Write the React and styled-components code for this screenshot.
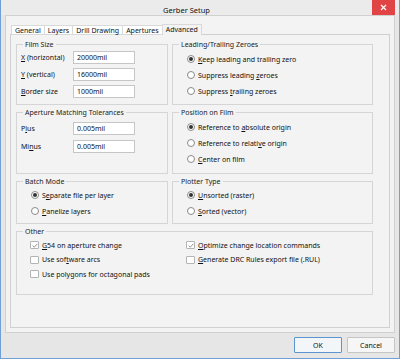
import React from 'react';
import styled, { createGlobalStyle } from 'styled-components';

const Global = createGlobalStyle`
  html, body { margin: 0; padding: 0; }
  body {
    font-family: "Noto Sans", "Open Sans", sans-serif;
    font-size: 7px;
    color: #1a1a1a;
    background: #ffffff;
  }
  #root { width: 400px; height: 359px; }
  * { box-sizing: border-box; }
`;

const Window = styled.div`
  width: 400px;
  height: 359px;
  border: 1px solid #6f9fd6;
  border-top: none;
  background: #e6e6e6;
  display: flex;
  flex-direction: column;
`;

const TitleBar = styled.div`
  height: 15px;
  display: flex;
  align-items: flex-start;
  background: #ebebeb;
`;

const Title = styled.div`
  flex: 1;
  text-align: center;
  font-size: 7.5px;
  line-height: 10px;
  padding-top: 5px;
  color: #111;
`;

const CloseButton = styled.div`
  width: 23px;
  height: 15px;
  margin-right: 4px;
  background: #e04444;
  display: flex;
  align-items: center;
  justify-content: center;
`;

const Frame = styled.div`
  margin: 0 4px;
  height: 318px;
  border: 1px solid #d0d0d0;
  background: #f3f3f3;
  padding: 9px 4px 4px 4px;
  display: flex;
  flex-direction: column;
`;

const TabRow = styled.div`
  display: flex;
  padding-left: 1px;
  height: 10px;
  position: relative;
  z-index: 1;
`;

const Tab = styled.div`
  height: ${p => (p.$active ? 11 : 10)}px;
  margin-top: ${p => (p.$active ? -1 : 0)}px;
  padding: 0 3px;
  line-height: 9px;
  border: 1px solid #d9d9d9;
  border-bottom: ${p => (p.$active ? 'none' : '1px solid #d9d9d9')};
  margin-left: -1px;
  background: ${p => (p.$active ? '#f3f3f3' : '#ffffff')};
  color: #111;
  &:first-child { margin-left: 0; }
`;

const TabPanel = styled.div`
  flex: 1;
  border: 1px solid #d0d0d0;
  margin-top: -1px;
  padding: 5px 0 0 5px;
  display: grid;
  grid-template-columns: 152px 201px;
  grid-template-rows: 65px 66px 47px 68px;
  column-gap: 4px;
  row-gap: 3px;
  align-content: start;
`;

const Group = styled.fieldset`
  margin: 0;
  min-width: 0;
  border: 1px solid #d5d5d5;
  padding: ${p => p.$pad || '2px 4px 0 4px'};
  grid-column: ${p => (p.$wide ? '1 / span 2' : 'auto')};
  display: flex;
  flex-direction: column;
  gap: ${p => p.$gap || 0}px;
`;

const Legend = styled.legend`
  padding: 0 2px;
  margin-left: 2px;
  line-height: 9px;
  color: #222;
`;

const FieldRow = styled.div`
  display: flex;
  align-items: center;
  height: 13px;
`;

const FieldLabel = styled.span`
  width: 52px;
  color: #111;
`;

const TextInput = styled.div`
  width: 62px;
  height: 13px;
  border: 1px solid #c6c6c6;
  background: #fff;
  padding-left: 3px;
  line-height: 11px;
  color: #111;
`;

const OptionRow = styled.div`
  display: flex;
  align-items: center;
  height: ${p => p.$h ?? 16}px;
  padding-left: ${p => p.$indent ?? 10}px;
  gap: 3px;
  color: #111;
`;

const RadioCircle = styled.span`
  width: 8px;
  height: 8px;
  border-radius: 50%;
  border: 1px solid #8a8a8a;
  background: #fff;
  display: flex;
  align-items: center;
  justify-content: center;
  flex: none;
  &::after {
    content: '';
    display: ${p => (p.$on ? 'block' : 'none')};
    width: 4px;
    height: 4px;
    border-radius: 50%;
    background: #333;
  }
`;

const CheckBox = styled.span`
  width: 9px;
  height: 8px;
  border: 1px solid #b4b4b4;
  border-radius: 1px;
  background: #fff;
  display: flex;
  align-items: center;
  justify-content: center;
  flex: none;
`;

const OtherGrid = styled.div`
  display: grid;
  grid-template-columns: 156px 1fr;
  grid-auto-rows: 14.5px;
  padding-left: 9px;
  padding-top: 2px;
`;

const Key = styled.u`
  text-decoration: underline;
  text-underline-offset: 1px;
  text-decoration-thickness: 1px;
`;

const Footer = styled.div`
  flex: 1;
  display: flex;
  justify-content: flex-end;
  align-items: flex-start;
  gap: 5px;
  padding: 4px 4px 0 0;
`;

const Button = styled.div`
  width: 48px;
  height: 16px;
  border: 1px solid ${p => (p.$primary ? '#5a95cf' : '#c5c5c5')};
  background: ${p => (p.$primary ? '#f3f6f9' : '#f6f6f6')};
  display: flex;
  align-items: center;
  justify-content: center;
  color: #111;
  border-radius: 1px;
`;

const Radio = ({ on, children, indent, h }) => (
  <OptionRow $indent={indent} $h={h}>
    <RadioCircle $on={on} />
    <span>{children}</span>
  </OptionRow>
);

const Check = ({ on, children }) => (
  <OptionRow $indent={0} $h={14.5}>
    <CheckBox>
      {on && (
        <svg width="6" height="5" viewBox="0 0 6 5">
          <path d="M0.6 2.6 L2.3 4.2 L5.4 0.8" fill="none" stroke="#777" strokeWidth="0.8" />
        </svg>
      )}
    </CheckBox>
    <span>{children}</span>
  </OptionRow>
);

export default function App() {
  return (
    <>
      <Global />
      <Window>
        <TitleBar>
          <Title>Gerber Setup</Title>
          <CloseButton>
            <svg width="7" height="7" viewBox="0 0 7 7">
              <path d="M1 1 L6 6 M6 1 L1 6" stroke="#fff" strokeWidth="1.2" />
            </svg>
          </CloseButton>
        </TitleBar>
        <Frame>
          <TabRow>
            <Tab>General</Tab>
            <Tab>Layers</Tab>
            <Tab>Drill Drawing</Tab>
            <Tab>Apertures</Tab>
            <Tab $active>Advanced</Tab>
          </TabRow>
          <TabPanel>
            <Group $pad="2px 4px 0 4px" $gap={4}>
              <Legend>Film Size</Legend>
              <FieldRow>
                <FieldLabel><Key>X</Key> (horizontal)</FieldLabel>
                <TextInput>20000mil</TextInput>
              </FieldRow>
              <FieldRow>
                <FieldLabel><Key>Y</Key> (vertical)</FieldLabel>
                <TextInput>16000mil</TextInput>
              </FieldRow>
              <FieldRow>
                <FieldLabel><Key>B</Key>order size</FieldLabel>
                <TextInput>1000mil</TextInput>
              </FieldRow>
            </Group>
            <Group $pad="2px 4px 0 4px">
              <Legend>Leading/Trailing Zeroes</Legend>
              <Radio on><Key>K</Key>eep leading and trailing zero</Radio>
              <Radio>Suppress leading <Key>z</Key>eroes</Radio>
              <Radio>Suppress <Key>t</Key>railing zeroes</Radio>
            </Group>
            <Group $pad="5px 4px 0 4px" $gap={5}>
              <Legend>Aperture Matching Tolerances</Legend>
              <FieldRow>
                <FieldLabel>P<Key>l</Key>us</FieldLabel>
                <TextInput>0.005mil</TextInput>
              </FieldRow>
              <FieldRow>
                <FieldLabel>Mi<Key>n</Key>us</FieldLabel>
                <TextInput>0.005mil</TextInput>
              </FieldRow>
            </Group>
            <Group $pad="2px 4px 0 4px">
              <Legend>Position on Film</Legend>
              <Radio on>Reference to <Key>a</Key>bsolute origin</Radio>
              <Radio>Reference to relati<Key>v</Key>e origin</Radio>
              <Radio><Key>C</Key>enter on film</Radio>
            </Group>
            <Group $pad="1px 4px 0 4px">
              <Legend>Batch Mode</Legend>
              <Radio on>S<Key>e</Key>parate file per layer</Radio>
              <Radio><Key>P</Key>anelize layers</Radio>
            </Group>
            <Group $pad="1px 4px 0 4px">
              <Legend>Plotter Type</Legend>
              <Radio on><Key>U</Key>nsorted (raster)</Radio>
              <Radio><Key>S</Key>orted (vector)</Radio>
            </Group>
            <Group $wide $pad="0 4px 0 4px">
              <Legend>Other</Legend>
              <OtherGrid>
                <Check on><Key>G</Key>54 on aperture change</Check>
                <Check on><Key>O</Key>ptimize change location commands</Check>
                <Check>Use sof<Key>t</Key>ware arcs</Check>
                <Check><Key>G</Key>enerate DRC Rules export file (.RUL)</Check>
                <Check>Use polygons for octagonal pads</Check>
              </OtherGrid>
            </Group>
          </TabPanel>
        </Frame>
        <Footer>
          <Button $primary>OK</Button>
          <Button>Cancel</Button>
        </Footer>
      </Window>
    </>
  );
}
